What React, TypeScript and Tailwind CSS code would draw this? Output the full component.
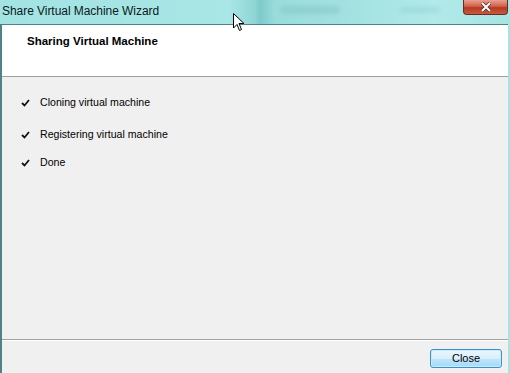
import React from 'react';

const steps = ['Cloning virtual machine', 'Registering virtual machine', 'Done'];

const Check: React.FC = () => (
  <svg width="9" height="8" viewBox="0 0 9 8" className="shrink-0">
    <path d="M1 4 L3.5 6.5 L8 1" fill="none" stroke="#111" strokeWidth="1.8" />
  </svg>
);

export default function App() {
  return (
    <div className="relative w-[510px] h-[373px] overflow-hidden bg-[#a6e4e4] flex flex-col font-['Liberation_Sans',Arial,sans-serif]">
      {/* title bar */}
      <div className="relative h-[24px] shrink-0 flex items-center pl-[2px] pb-[2px] bg-[linear-gradient(90deg,#a3e3e3_0%,#a9e6e6_45%,#8fd5d5_50%,#7ecaca_51%,#9adcdc_54%,#a4e2e2_70%,#b2e9e9_85%,#a6e4e4_100%)]">
        <span className="text-[12px] text-[#0a1a1a] tracking-[-0.05px]">Share Virtual Machine Wizard</span>
        <div className="absolute left-[280px] top-[6px] w-[60px] h-[8px] rounded bg-[#80c4c4] opacity-50 blur-[2px]" />
        <div className="absolute left-[400px] top-[7px] w-[40px] h-[6px] rounded bg-[#8ccccc] opacity-40 blur-[2px]" />
        <div className="absolute right-[2px] top-0 w-[45px] h-[15px] rounded-b-[4px] border border-t-0 border-[#6b2a20] bg-[linear-gradient(180deg,#e8a090_0%,#d0604a_45%,#b53a22_55%,#c8583e_100%)] flex items-center justify-center">
          <svg width="12" height="10" viewBox="0 0 12 10">
            <path d="M2 1 L10 9 M10 1 L2 9" stroke="#4a2a24" strokeWidth="3.4" />
            <path d="M2 1 L10 9 M10 1 L2 9" stroke="#fff" strokeWidth="2" />
          </svg>
        </div>
      </div>

      {/* window body */}
      <div className="flex-1 flex flex-col border-t border-l-2 border-[#4f8383] bg-[#f0f0f0] mr-[2px]">
        <div className="h-[52px] shrink-0 bg-white border-b border-[#a0a0a0] pl-[25px] pt-[10px]">
          <span className="block leading-[12px] text-[11.5px] font-bold text-black">Sharing Virtual Machine</span>
        </div>

        <div className="flex-1 flex flex-col pl-[19px] pt-[19px] gap-[14px]">
          {steps.map((s, i) => (
            <div key={s} className={`flex items-center gap-[10px] h-[14px] ${i === 1 ? 'mt-[4px]' : ''}`}>
              <Check />
              <span className="text-[10.6px] text-black">{s}</span>
            </div>
          ))}
        </div>

        <div className="h-[34px] shrink-0 border-t border-[#a0a0a0] shadow-[inset_0_1px_0_#ffffff] flex items-start justify-end pr-[6px] pt-[9px]">
          <button className="w-[72px] h-[19px] rounded-[3px] border border-[#3c8fc8] bg-[linear-gradient(180deg,#eaf6fd_0%,#d9f0fc_50%,#bee6fd_51%,#a7d9f5_100%)] shadow-[inset_0_0_0_1px_#c8ecfc] text-[11px] text-black leading-none">
            Close
          </button>
        </div>
      </div>

      {/* mouse pointer */}
      <svg className="absolute left-[233px] top-[13px]" width="13" height="20" viewBox="0 0 13 20">
        <path d="M0.5 0.5 L0.5 15 L4 11.5 L6.5 17.5 L8.5 16.5 L6 10.5 L11 10.5 Z" fill="#fff" stroke="#000" strokeWidth="1" />
      </svg>
    </div>
  );
}
